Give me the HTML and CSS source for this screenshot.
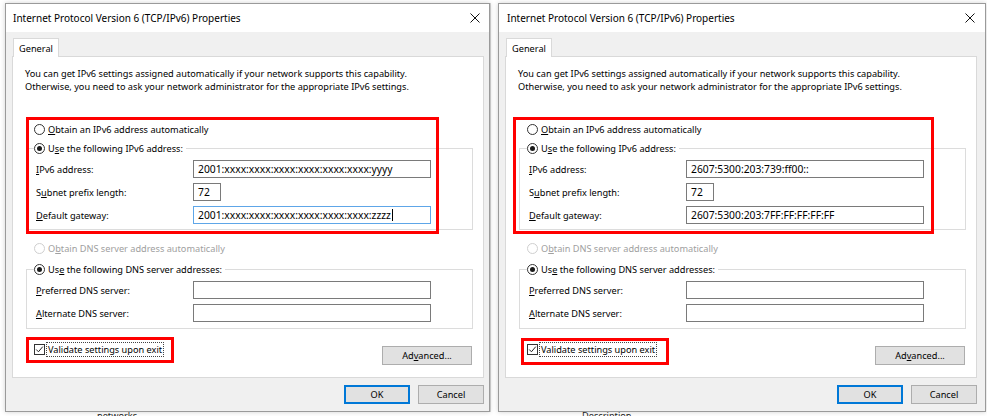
FILE: index.html
```html
<!DOCTYPE html>
<html lang="en">
<head>
<meta charset="utf-8">
<title>Internet Protocol Version 6 (TCP/IPv6) Properties</title>
<link rel="stylesheet" href="styles.css">
</head>
<body>
<div class="screen">
  <div class="row">
    <section class="dialog dialog-a">
      <header class="titlebar">
        <span class="title">Internet Protocol Version 6 (TCP/IPv6) Properties</span>
        <svg class="close" viewBox="0 0 10 10" width="10" height="10"><path d="M0.5 0.5L9.5 9.5M9.5 0.5L0.5 9.5" stroke="#111" stroke-width="1" fill="none"/></svg>
      </header>
      <div class="client">
        <div class="tabs"><div class="tab">General</div></div>
        <div class="panel">
          <p class="intro">You can get IPv6 settings assigned automatically if your network supports this capability.<br>Otherwise, you need to ask your network administrator for the appropriate IPv6 settings.</p>
          <div class="opt first"><span class="radio"></span><span><u>O</u>btain an IPv6 address automatically</span></div>
          <fieldset class="group">
            <legend class="opt"><span class="radio on"></span><span>U<u>s</u>e the following IPv6 address:</span></legend>
            <div class="field"><span class="lbl"><u>I</u>Pv6 address:</span><div class="box">2001:xxxx:xxxx:xxxx:xxxx:xxxx:xxxx:yyyy</div></div>
            <div class="field"><span class="lbl">S<u>u</u>bnet prefix length:</span><div class="box short">72</div></div>
            <div class="field"><span class="lbl"><u>D</u>efault gateway:</span><div class="box focus">2001:xxxx:xxxx:xxxx:xxxx:xxxx:xxxx:zzzz<span class="caret"></span></div></div>
          </fieldset>
          <div class="opt disabled"><span class="radio"></span><span>O<u>b</u>tain DNS server address automatically</span></div>
          <fieldset class="group dns">
            <legend class="opt"><span class="radio on"></span><span>Us<u>e</u> the following DNS server addresses:</span></legend>
            <div class="field"><span class="lbl"><u>P</u>referred DNS server:</span><div class="box"></div></div>
            <div class="field"><span class="lbl"><u>A</u>lternate DNS server:</span><div class="box"></div></div>
          </fieldset>
          <div class="bottom">
            <div class="check-row"><span class="check"><svg viewBox="0 0 11 11" width="9" height="9"><path d="M1.5 5.5L4.2 8.3L9.5 2" stroke="#222" stroke-width="1.2" fill="none"/></svg></span><span class="focus-text">Validate settings upon exit</span></div>
            <button class="btn adv">Ad<u>v</u>anced...</button>
          </div>
        </div>
        <div class="buttons"><button class="btn ok">OK</button><button class="btn">Cancel</button></div>
      </div>
      <div class="mark mark-ip"></div>
      <div class="mark mark-check"></div>
    </section>

    <div class="gap"></div>

    <section class="dialog dialog-b">
      <header class="titlebar">
        <span class="title">Internet Protocol Version 6 (TCP/IPv6) Properties</span>
        <svg class="close" viewBox="0 0 10 10" width="10" height="10"><path d="M0.5 0.5L9.5 9.5M9.5 0.5L0.5 9.5" stroke="#111" stroke-width="1" fill="none"/></svg>
      </header>
      <div class="client">
        <div class="tabs"><div class="tab">General</div></div>
        <div class="panel">
          <p class="intro">You can get IPv6 settings assigned automatically if your network supports this capability.<br>Otherwise, you need to ask your network administrator for the appropriate IPv6 settings.</p>
          <div class="opt first"><span class="radio"></span><span><u>O</u>btain an IPv6 address automatically</span></div>
          <fieldset class="group">
            <legend class="opt"><span class="radio on"></span><span>U<u>s</u>e the following IPv6 address:</span></legend>
            <div class="field"><span class="lbl"><u>I</u>Pv6 address:</span><div class="box">2607:5300:203:739:ff00::</div></div>
            <div class="field"><span class="lbl">S<u>u</u>bnet prefix length:</span><div class="box short">72</div></div>
            <div class="field"><span class="lbl"><u>D</u>efault gateway:</span><div class="box">2607:5300:203:7FF:FF:FF:FF:FF</div></div>
          </fieldset>
          <div class="opt disabled"><span class="radio"></span><span>O<u>b</u>tain DNS server address automatically</span></div>
          <fieldset class="group dns">
            <legend class="opt"><span class="radio on"></span><span>Us<u>e</u> the following DNS server addresses:</span></legend>
            <div class="field"><span class="lbl"><u>P</u>referred DNS server:</span><div class="box"></div></div>
            <div class="field"><span class="lbl"><u>A</u>lternate DNS server:</span><div class="box"></div></div>
          </fieldset>
          <div class="bottom">
            <div class="check-row"><span class="check"><svg viewBox="0 0 11 11" width="9" height="9"><path d="M1.5 5.5L4.2 8.3L9.5 2" stroke="#222" stroke-width="1.2" fill="none"/></svg></span><span class="focus-text">Validate settings upon exit</span></div>
            <button class="btn adv">Ad<u>v</u>anced...</button>
          </div>
        </div>
        <div class="buttons"><button class="btn ok">OK</button><button class="btn">Cancel</button></div>
      </div>
      <div class="mark mark-ip"></div>
      <div class="mark mark-check"></div>
    </section>
  </div>
  <div class="strip">
    <span class="bg-a">networks</span>
    <span class="bg-b">Description</span>
  </div>
</div>
</body>
</html>
```

FILE: styles.css
```css
* { box-sizing: border-box; }
html, body { margin: 0; padding: 0; }
body {
  width: 987px;
  height: 416px;
  overflow: hidden;
  background: #fff;
  font-family: "Noto Sans", "Open Sans", sans-serif;
  font-size: 9.2px;
  color: #000;
}
.screen { height: 416px; overflow: hidden; background: #fff; }
.row { display: flex; padding-top: 3px; }

.gap { width: 8px; border-left: 1px solid #d6d6d6; }

.dialog {
  position: relative;
  display: flex;
  flex-direction: column;
  height: 409px;
  border: 1px solid #9a9a9a;
  background: #f0f0f0;
  box-shadow: 0 0 5px rgba(0,0,0,0.18);
}
.dialog-a { width: 485px; margin-left: 5px; }
.dialog-b { width: 488px; margin-left: 0; }

.titlebar {
  height: 28px;
  flex: none;
  background: #fff;
  display: flex;
  align-items: center;
  justify-content: space-between;
  padding: 0 9px 0 7px;
}
.title { font-size: 10px; line-height: 14px; }
.close { display: block; }
.dialog-b .titlebar { padding-right: 10px; padding-left: 8px; }

.client {
  flex: 1;
  display: flex;
  flex-direction: column;
  padding: 6px 5px 7px 6px;
}
.dialog-b .client { padding-right: 8px; }

.tabs { display: flex; height: 18px; flex: none; }
.tab {
  position: relative;
  z-index: 1;
  margin-left: 1px;
  width: 46px;
  height: 19px;
  border: 1px solid #d9d9d9;
  border-bottom: none;
  background: #fff;
  display: flex;
  align-items: center;
  justify-content: center;
  line-height: 13px;
}

.panel {
  height: 322px;
  flex: none;
  background: #fff;
  border: 1px solid #d9d9d9;
  padding: 10px 10px 13px 12px;
}
.intro { margin: 0; line-height: 13px; white-space: nowrap; }

.opt {
  display: flex;
  align-items: center;
  height: 16px;
  line-height: 13px;
  padding-left: 9px;
  white-space: nowrap;
}
.opt.first { margin-top: 28px; }
legend.opt { padding: 0 3px 0 0; margin-left: -2px; }

.radio {
  flex: none;
  width: 11px;
  height: 11px;
  margin-right: 3px;
  border: 1px solid #333;
  border-radius: 50%;
  background: #fff;
  display: flex;
  align-items: center;
  justify-content: center;
}
.radio.on::after {
  content: "";
  width: 5px;
  height: 5px;
  border-radius: 50%;
  background: #1a1a1a;
}
.opt.disabled { margin-top: 10px; color: #a0a0a0; }
.opt.disabled .radio { border-color: #cfcfcf; }

.group {
  margin: 3px 0 0 1px;
  padding: 4px 10px 5px 9px;
  border: 1px solid #dcdcdc;
  min-width: 0;
}
.group.dns { margin-top: 5px; padding-bottom: 6px; }

.field { display: flex; align-items: center; height: 18px; }
.field + .field { margin-top: 5px; }
.lbl { width: 157px; flex: none; line-height: 13px; white-space: nowrap; }
.box {
  width: 238px;
  height: 18px;
  flex: none;
  border: 1px solid #7a7a7a;
  background: #fff;
  padding: 0 4px;
  font-size: 10.3px;
  line-height: 16px;
  white-space: nowrap;
  overflow: hidden;
  display: flex;
  align-items: center;
}
.box.short { width: 28px; }
.box.focus { border-color: #5ea6e8; }
.caret { display: inline-block; width: 1px; height: 12px; background: #000; margin-left: 1px; }

u { text-underline-offset: 1px; }

.bottom {
  display: flex;
  justify-content: space-between;
  margin-top: 12px;
  margin-right: 1px;
}
.check-row {
  align-self: flex-start;
  display: flex;
  align-items: center;
  height: 16px;
  padding-left: 9px;
  white-space: nowrap;
}
.check {
  flex: none;
  width: 11px;
  height: 11px;
  margin-right: 2px;
  border: 1px solid #333;
  background: #fff;
  display: flex;
  align-items: center;
  justify-content: center;
}
.check svg { display: block; }
.focus-text { outline: 1px dotted #444; outline-offset: 0; padding: 0 1px; line-height: 13px; }

.btn {
  font: inherit;
  color: #000;
  background: #e1e1e1;
  border: 1px solid #adadad;
  padding: 0;
  width: 66px;
  height: 19px;
  line-height: 15px;
}
.btn.adv { width: 90px; margin-top: 5px; }
.btn.ok { border-color: #0078d7; box-shadow: inset 0 0 0 1px #0078d7; }
.buttons {
  display: flex;
  justify-content: flex-end;
  gap: 8px;
  margin-top: 7px;
}

.mark { position: absolute; border: 3px solid #f00; pointer-events: none; }
.dialog-a .mark-ip { left: 20px; top: 113px; width: 413px; height: 117px; }
.dialog-a .mark-check { left: 20px; top: 333px; width: 148px; height: 26px; }
.dialog-b .mark-ip { left: 14px; top: 113px; width: 421px; height: 117px; }
.dialog-b .mark-check { left: 22px; top: 334px; width: 148px; height: 27px; }

.strip { display: flex; height: 4px; line-height: 8px; color: #222; }
.bg-a { margin-left: 97px; }
.bg-b { margin-left: 445px; }
```
